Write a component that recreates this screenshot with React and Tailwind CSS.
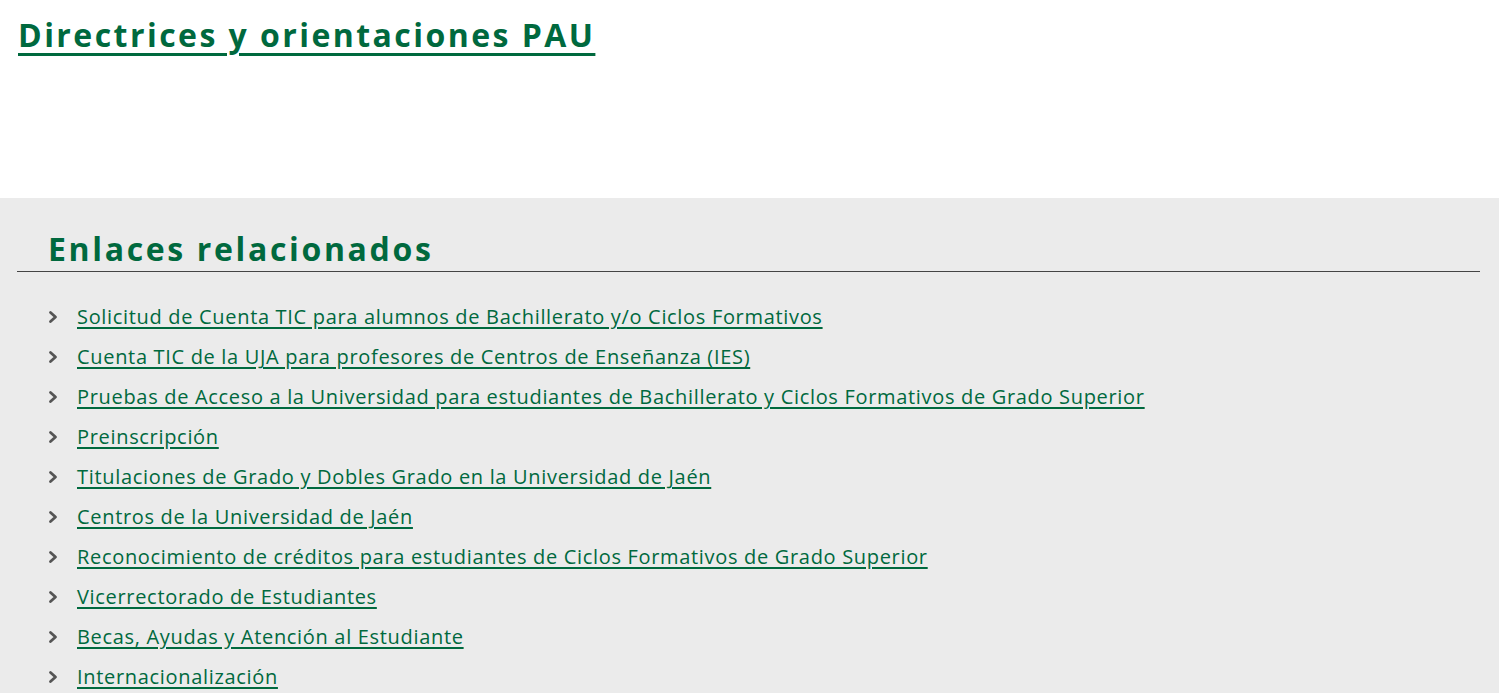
import React from "react";

const links = [
  "Solicitud de Cuenta TIC para alumnos de Bachillerato y/o Ciclos Formativos",
  "Cuenta TIC de la UJA para profesores de Centros de Enseñanza (IES)",
  "Pruebas de Acceso a la Universidad para estudiantes de Bachillerato y Ciclos Formativos de Grado Superior",
  "Preinscripción",
  "Titulaciones de Grado y Dobles Grado en la Universidad de Jaén",
  "Centros de la Universidad de Jaén",
  "Reconocimiento de créditos para estudiantes de Ciclos Formativos de Grado Superior",
  "Vicerrectorado de Estudiantes",
  "Becas, Ayudas y Atención al Estudiante",
  "Internacionalización",
];

function Chevron() {
  return (
    <svg width="10" height="14" viewBox="0 0 10 14" className="shrink-0">
      <path d="M2.5 2.5 L7.5 7 L2.5 11.5" fill="none" stroke="#555555" strokeWidth="2.8" strokeLinecap="round" strokeLinejoin="round" />
    </svg>
  );
}

export default function App() {
  return (
    <div className="min-h-screen bg-white" style={{ fontFamily: '"Open Sans", "Liberation Sans", sans-serif' }}>
      <div className="h-[198px] px-[18px] pt-[13px]">
        <h1 className="text-[32px] leading-[44px] font-bold tracking-[2.45px] text-[#00693e]">
          <a href="#" className="underline decoration-[3px] underline-offset-[6px]">Directrices y orientaciones PAU</a>
        </h1>
      </div>
      <div className="bg-[#ebebeb] pl-[17px] pr-[19px] pt-[31px] pb-[40px]">
        <div className="border-b border-[#444444] pl-[31px] pb-[2px]">
          <h2 className="text-[32px] leading-[40px] font-bold tracking-[2.65px] text-[#00693e]">Enlaces relacionados</h2>
        </div>
        <ul className="pl-[31px] pt-[25px] flex flex-col">
          {links.map((l) => (
            <li key={l} className="flex items-center h-[40px] gap-[19px]">
              <Chevron />
              <a href="#" className="text-[20px] leading-[26px] tracking-[0.68px] text-[#00693e] underline decoration-[1.5px] underline-offset-[3px]">{l}</a>
            </li>
          ))}
        </ul>
      </div>
    </div>
  );
}
